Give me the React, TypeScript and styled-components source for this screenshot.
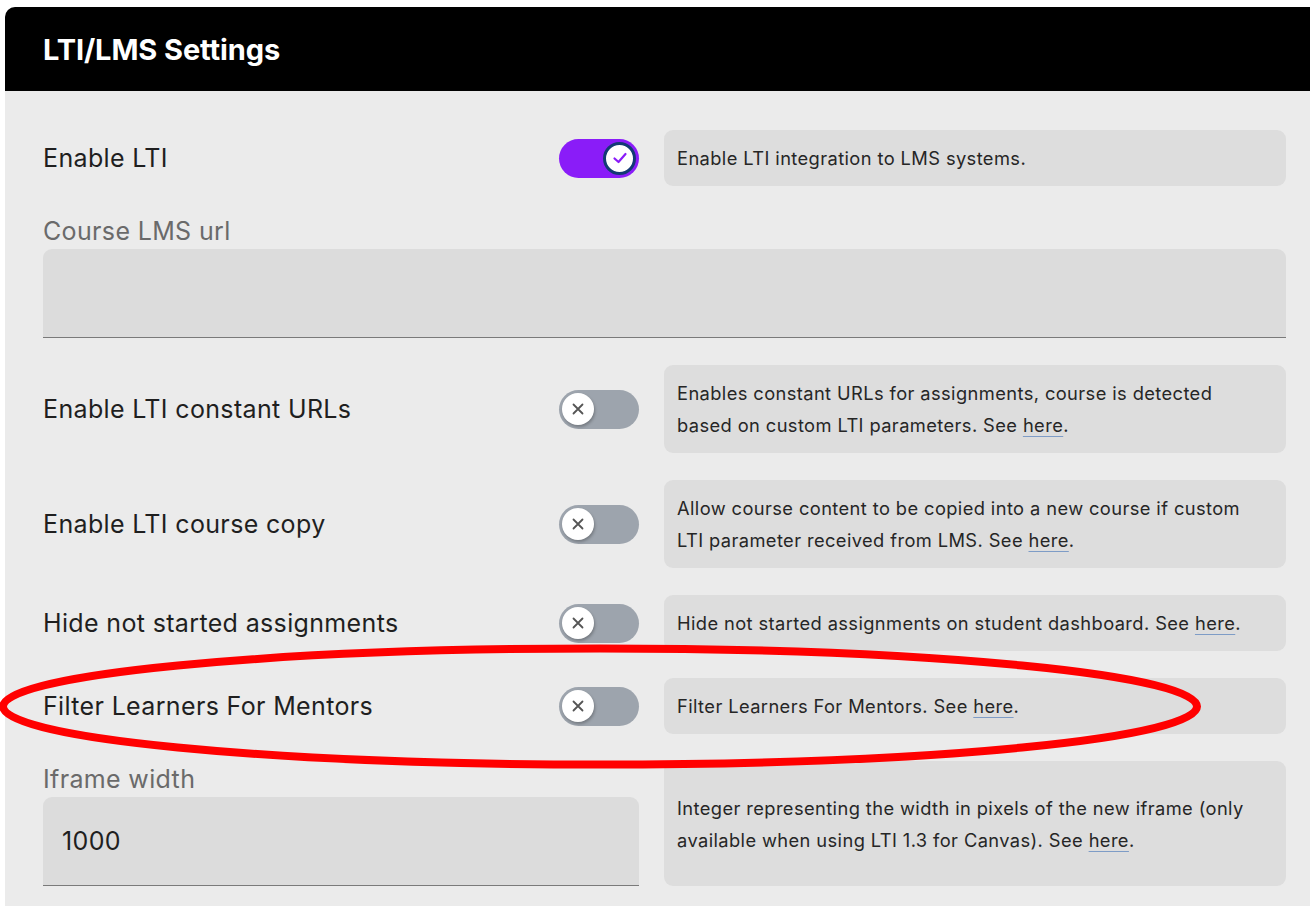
import React from "react";
import styled, { createGlobalStyle } from "styled-components";

const GlobalStyle = createGlobalStyle`
  html, body { margin: 0; padding: 0; background: #ffffff; }
  body { font-family: Inter, "Noto Sans", sans-serif; overflow: hidden; }
  * { box-sizing: border-box; }
`;

const Page = styled.div`
  position: relative;
  width: 1310px;
  height: 906px;
  padding: 7px 0 0 5px;
  overflow: hidden;
`;

const Panel = styled.section`
  height: 899px;
  background: #ebebeb;
  border-top-left-radius: 10px;
  overflow: hidden;
`;

const Header = styled.header`
  height: 84px;
  background: #000;
  display: flex;
  align-items: center;
  padding: 0 0 0 38px;
`;

const Title = styled.h1`
  margin: 0;
  color: #fff;
  font-size: 29px;
  font-weight: 700;
  letter-spacing: -0.1px;
`;

const Body = styled.div`
  display: flex;
  flex-direction: column;
  gap: 27px;
  padding: 39px 24px 0 38px;
`;

const Row = styled.div`
  display: grid;
  grid-template-columns: 596px 622px;
  column-gap: 25px;
  align-items: stretch;
`;

const LeftCell = styled.div`
  display: flex;
  align-items: center;
  justify-content: space-between;
`;

const Label = styled.label<{ $muted?: boolean }>`
  font-size: 25px;
  line-height: 36px;
  letter-spacing: 0.35px;
  color: ${(p) => (p.$muted ? "#6a6a6a" : "#1f1f1f")};
`;

const Description = styled.div`
  background: #dddddd;
  border-radius: 9px;
  padding: 12px 30px 12px 13px;
  display: flex;
  align-items: center;
  font-size: 18.3px;
  line-height: 32px;
  letter-spacing: 0.4px;
  color: #262626;
`;

const Link = styled.a`
  color: #262626;
  text-decoration: underline;
  text-decoration-color: #7e9cc6;
  text-underline-offset: 4px;
  text-decoration-thickness: 1px;
`;

const FieldStack = styled.div`
  display: flex;
  flex-direction: column;
`;

const Input = styled.div<{ $height?: number }>`
  height: ${(p) => p.$height ?? 89}px;
  background: #dcdcdc;
  border-radius: 9px 9px 0 0;
  border-bottom: 1px solid #7a7a7a;
  display: flex;
  align-items: center;
  padding: 0 19px;
  font-size: 25px;
  letter-spacing: 0.35px;
  color: #1f1f1f;
`;

const Track = styled.button<{ $on?: boolean }>`
  position: relative;
  width: 80px;
  height: 39px;
  border: none;
  padding: 0;
  border-radius: 20px;
  background: ${(p) => (p.$on ? "#8a1cf8" : "#9da4ad")};
  flex-shrink: 0;
  cursor: pointer;
`;

const Knob = styled.span<{ $on?: boolean }>`
  position: absolute;
  top: ${(p) => (p.$on ? "3px" : "3.5px")};
  left: ${(p) => (p.$on ? "44px" : "3px")};
  width: ${(p) => (p.$on ? "33px" : "32px")};
  height: ${(p) => (p.$on ? "33px" : "32px")};
  border-radius: 50%;
  background: #fff;
  border: ${(p) => (p.$on ? "3px solid #133a75" : "none")};
  box-shadow: ${(p) => (p.$on ? "none" : "1px 2px 3px rgba(0,0,0,0.25)")};
  display: flex;
  align-items: center;
  justify-content: center;
`;

const Overlay = styled.svg`
  position: absolute;
  left: 0;
  top: 0;
  pointer-events: none;
`;

function Toggle({ on }: { on?: boolean }) {
  return (
    <Track $on={on} aria-pressed={on}>
      <Knob $on={on}>
        {on ? (
          <svg width="18" height="18" viewBox="0 0 18 18">
            <polyline points="3.5,9.5 7.5,13 14.5,5" fill="none" stroke="#8a1cf8" strokeWidth="2.2" strokeLinecap="round" strokeLinejoin="round" />
          </svg>
        ) : (
          <svg width="14" height="14" viewBox="0 0 14 14">
            <path d="M2.5 2.5 L11.5 11.5 M11.5 2.5 L2.5 11.5" stroke="#555" strokeWidth="1.8" strokeLinecap="round" />
          </svg>
        )}
      </Knob>
    </Track>
  );
}

function ToggleRow({ label, on, children }: { label: string; on?: boolean; children: React.ReactNode }) {
  return (
    <Row>
      <LeftCell>
        <Label>{label}</Label>
        <Toggle on={on} />
      </LeftCell>
      <Description>
        <span>{children}</span>
      </Description>
    </Row>
  );
}

const Here = () => (
  <>
    See <Link href="#">here</Link>.
  </>
);

export default function App() {
  return (
    <>
      <GlobalStyle />
      <Page>
        <Panel>
          <Header>
            <Title>LTI/LMS Settings</Title>
          </Header>
          <Body>
            <ToggleRow label="Enable LTI" on>
              Enable LTI integration to LMS systems.
            </ToggleRow>
            <FieldStack>
              <Label $muted>Course LMS url</Label>
              <Input />
            </FieldStack>
            <ToggleRow label="Enable LTI constant URLs">
              Enables constant URLs for assignments, course is detected based on custom LTI parameters. <Here />
            </ToggleRow>
            <ToggleRow label="Enable LTI course copy">
              Allow course content to be copied into a new course if custom LTI parameter received from LMS. <Here />
            </ToggleRow>
            <ToggleRow label="Hide not started assignments">
              Hide not started assignments on student dashboard. <Here />
            </ToggleRow>
            <ToggleRow label="Filter Learners For Mentors">
              Filter Learners For Mentors. <Here />
            </ToggleRow>
            <Row>
              <FieldStack>
                <Label $muted>Iframe width</Label>
                <Input>1000</Input>
              </FieldStack>
              <Description>
                <span>
                  Integer representing the width in pixels of the new iframe (only available when using LTI 1.3 for Canvas). <Here />
                </span>
              </Description>
            </Row>
          </Body>
        </Panel>
        <Overlay width="1310" height="906" viewBox="0 0 1310 906">
          <ellipse cx="600" cy="706.5" rx="597" ry="58" fill="none" stroke="#ff0000" strokeWidth="8" />
        </Overlay>
      </Page>
    </>
  );
}
